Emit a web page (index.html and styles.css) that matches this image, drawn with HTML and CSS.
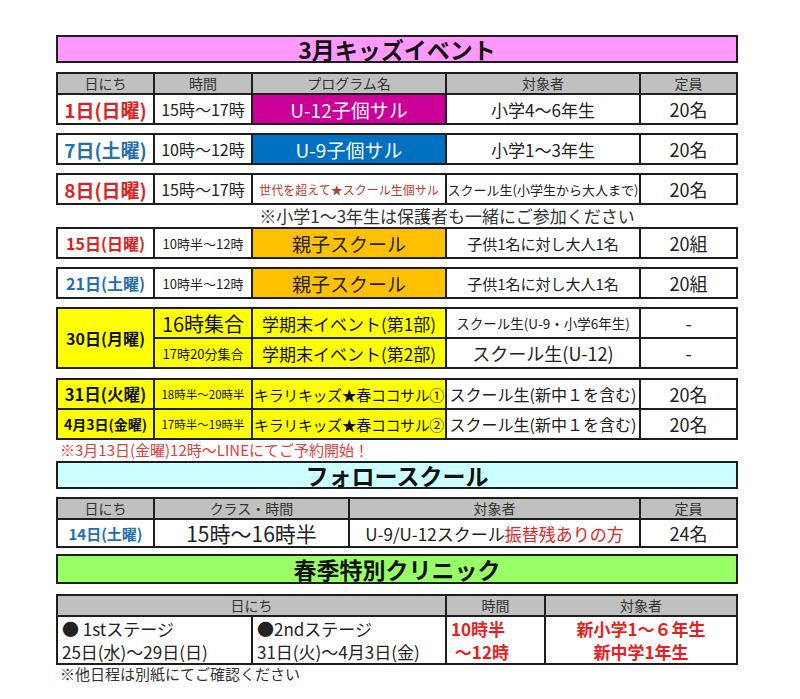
FILE: index.html
```html
<!DOCTYPE html>
<html lang="ja">
<head>
<meta charset="utf-8">
<title>3月キッズイベント</title>
<link rel="stylesheet" href="styles.css">
</head>
<body>
<div class="page">
  <div class="title pink">3月キッズイベント</div>

  <div class="g5 mt9">
    <div class="h">日にち</div>
    <div class="h">時間</div>
    <div class="h">プログラム名</div>
    <div class="h">対象者</div>
    <div class="h">定員</div>
    <div class="c date red d19">1日(日曜)</div>
    <div class="c t16">15時～17時</div>
    <div class="c prog magenta">U-12子個サル</div>
    <div class="c f17">小学4～6年生</div>
    <div class="c f18">20名</div>
  </div>

  <div class="g5 mt8">
    <div class="c date blue d19">7日(土曜)</div>
    <div class="c t16">10時～12時</div>
    <div class="c prog bluebg">U-9子個サル</div>
    <div class="c f17">小学1～3年生</div>
    <div class="c f18">20名</div>
  </div>

  <div class="g5 mt8">
    <div class="c date red d19">8日(日曜)</div>
    <div class="c t16">15時～17時</div>
    <div class="c small-red">世代を超えて★スクール生個サル</div>
    <div class="c f13">スクール生(小学生から大人まで)</div>
    <div class="c f18">20名</div>
  </div>

  <div class="note-mid">※小学1～3年生は保護者も一緒にご参加ください</div>

  <div class="g5">
    <div class="c date red d16">15日(日曜)</div>
    <div class="c t13">10時半～12時</div>
    <div class="c orange f19">親子スクール</div>
    <div class="c f15">子供1名に対し大人1名</div>
    <div class="c f18">20組</div>
  </div>

  <div class="g5 mt8">
    <div class="c date blue d16">21日(土曜)</div>
    <div class="c t13">10時半～12時</div>
    <div class="c orange f19">親子スクール</div>
    <div class="c f15">子供1名に対し大人1名</div>
    <div class="c f18">20組</div>
  </div>

  <div class="g5 mt8">
    <div class="c date yellow span2 d16">30日(月曜)</div>
    <div class="c yellow f20">16時集合</div>
    <div class="c yellow f17">学期末イベント(第1部)</div>
    <div class="c f135">スクール生(U-9・小学6年生)</div>
    <div class="c f18">-</div>
    <div class="c yellow t13">17時20分集合</div>
    <div class="c yellow f17">学期末イベント(第2部)</div>
    <div class="c f18">スクール生(U-12)</div>
    <div class="c f18">-</div>
  </div>

  <div class="g5 mt9">
    <div class="c date yellow d165">31日(火曜)</div>
    <div class="c yellow t115">18時半～20時半</div>
    <div class="c yellow kira">キラリキッズ★春ココサル①</div>
    <div class="c f16">スクール生(新中１を含む)</div>
    <div class="c f18">20名</div>
    <div class="c date yellow d14">4月3日(金曜)</div>
    <div class="c yellow t115">17時半～19時半</div>
    <div class="c yellow kira">キラリキッズ★春ココサル②</div>
    <div class="c f16">スクール生(新中１を含む)</div>
    <div class="c f18">20名</div>
  </div>

  <div class="note-red">※3月13日(金曜)12時～LINEにてご予約開始！</div>

  <div class="title cyan">フォロースクール</div>

  <div class="g4 mt8">
    <div class="h">日にち</div>
    <div class="h">クラス・時間</div>
    <div class="h">対象者</div>
    <div class="h">定員</div>
    <div class="c date blue d15">14日(土曜)</div>
    <div class="c f21">15時～16時半</div>
    <div class="c f17">U-9/U-12スクール<span class="red-txt">振替残ありの方</span></div>
    <div class="c f18">24名</div>
  </div>

  <div class="title green mt6">春季特別クリニック</div>

  <div class="gc mt10">
    <div class="h span-c2">日にち</div>
    <div class="h">時間</div>
    <div class="h">対象者</div>
    <div class="cl">● 1stステージ<br>25日(水)～29日(日)</div>
    <div class="cl">●2ndステージ<br>31日(火)～4月3日(金)</div>
    <div class="cl bold-red">10時半<br>&nbsp;～12時</div>
    <div class="cl bold-red center">新小学1～６年生<br>新中学1年生</div>
  </div>

  <div class="note-bottom">※他日程は別紙にてご確認ください</div>
</div>
</body>
</html>
```

FILE: styles.css
```css
html, body {
  margin: 0;
  padding: 0;
  background: #ffffff;
}

body {
  font-family: "Noto Sans CJK JP", "Noto Sans", sans-serif;
  color: #222222;
}

.page {
  padding: 35px 0 0 56px;
  width: 682px;
}

.title {
  border: 2px solid #1e1e1e;
  height: 24px;
  line-height: 24px;
  font-size: 23px;
  font-weight: bold;
  text-align: center;
  color: #111111;
}

.pink { background: #ff99ff; }
.cyan { background: #ccffff; }
.green { background: #99ff66; height: 26px; line-height: 26px; }

.mt6 { margin-top: 6px; }
.mt8 { margin-top: 8px; }
.mt9 { margin-top: 9px; }
.mt10 { margin-top: 10px; }

.g5, .g4, .gc {
  display: grid;
  gap: 2px;
  background: #1e1e1e;
  border: 2px solid #1e1e1e;
}

.g5 { grid-template-columns: 95px 96px 192px 192px 95px; }
.g4 { grid-template-columns: 95px 193px 289px 95px; }
.gc { grid-template-columns: 193px 192px 97px 190px; }

.h {
  background: #c0c0c0;
  height: 19px;
  line-height: 19px;
  font-size: 14px;
  text-align: center;
  color: #333333;
}

.c {
  background: #ffffff;
  height: 28px;
  display: flex;
  align-items: center;
  justify-content: center;
  white-space: nowrap;
  color: #222222;
}

.g4 .c { height: 26px; }

.span2 {
  grid-row: span 2;
  height: auto;
}

.span-c2 { grid-column: span 2; }

.date { font-weight: bold; }
.red { color: #dd2222; }
.blue { color: #2270b0; }
.d19 { font-size: 19px; }
.d165 { font-size: 16.5px; }
.d16 { font-size: 16px; }
.d15 { font-size: 15px; }
.d14 { font-size: 14px; }

.t16 { font-size: 16px; }
.t13 { font-size: 13px; }
.t115 { font-size: 11.5px; }

.f13 { font-size: 13px; }
.f135 { font-size: 13.5px; }
.f15 { font-size: 15px; }
.f16 { font-size: 16px; }
.f17 { font-size: 17px; }
.f18 { font-size: 18px; }
.f19 { font-size: 19px; }
.f20 { font-size: 20px; }
.f21 { font-size: 21px; }

.kira {
  font-size: 15px;
  letter-spacing: -0.4px;
}

.prog {
  font-size: 19px;
  color: #ffffff;
}

.magenta { background: #cc0099; }
.bluebg { background: #0070c0; }
.orange { background: #ffc000; }
.yellow { background: #ffff00; color: #111111; }

.small-red {
  font-size: 12px;
  color: #c0392b;
}

.red-txt { color: #dd2828; }

.note-mid {
  height: 22px;
  line-height: 22px;
  margin-left: 197px;
  width: 388px;
  text-align: center;
  font-size: 17px;
  white-space: nowrap;
  color: #333333;
}

.note-red {
  height: 21px;
  line-height: 20px;
  padding-left: 4px;
  font-size: 15px;
  color: #e04040;
  white-space: nowrap;
}

.cl {
  background: #ffffff;
  height: 46px;
  padding-left: 4px;
  font-size: 17px;
  line-height: 23px;
  white-space: nowrap;
  color: #222222;
}

.bold-red {
  font-weight: bold;
  color: #ee1c1c;
}

.center {
  text-align: center;
  padding-left: 0;
}

.note-bottom {
  padding-left: 4px;
  height: 18px;
  line-height: 18px;
  font-size: 15px;
  color: #333333;
  white-space: nowrap;
}
```
